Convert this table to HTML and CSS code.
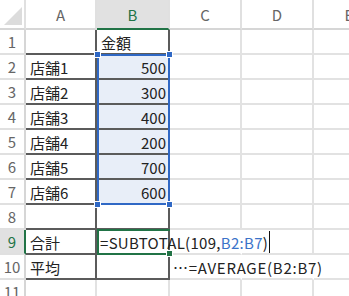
FILE: index.html
```html
<!DOCTYPE html>
<html lang="ja">
<head>
<meta charset="utf-8">
<title>Sheet1</title>
<link rel="stylesheet" href="styles.css">
</head>
<body>
<div class="workspace">
  <div class="sheet grid">
    <!-- column headers -->
    <div class="corner"><span class="tri"></span></div>
    <div class="colhdr">A</div>
    <div class="colhdr is-active">B</div>
    <div class="colhdr">C</div>
    <div class="colhdr">D</div>
    <div class="colhdr">E</div>

    <!-- row 1 -->
    <div class="rowhdr">1</div>
    <div class="cell tb"></div>
    <div class="cell tb">金額</div>
    <div class="cell"></div><div class="cell"></div><div class="cell"></div>

    <!-- rows 2-7 -->
    <div class="rowhdr">2</div>
    <div class="cell tb">店舗1</div>
    <div class="cell tb sel num">500</div>
    <div class="cell"></div><div class="cell"></div><div class="cell"></div>

    <div class="rowhdr">3</div>
    <div class="cell tb">店舗2</div>
    <div class="cell tb sel num">300</div>
    <div class="cell"></div><div class="cell"></div><div class="cell"></div>

    <div class="rowhdr">4</div>
    <div class="cell tb">店舗3</div>
    <div class="cell tb sel num">400</div>
    <div class="cell"></div><div class="cell"></div><div class="cell"></div>

    <div class="rowhdr">5</div>
    <div class="cell tb">店舗4</div>
    <div class="cell tb sel num">200</div>
    <div class="cell"></div><div class="cell"></div><div class="cell"></div>

    <div class="rowhdr">6</div>
    <div class="cell tb">店舗5</div>
    <div class="cell tb sel num">700</div>
    <div class="cell"></div><div class="cell"></div><div class="cell"></div>

    <div class="rowhdr">7</div>
    <div class="cell tb">店舗6</div>
    <div class="cell tb sel num">600</div>
    <div class="cell"></div><div class="cell"></div><div class="cell"></div>

    <!-- row 8 -->
    <div class="rowhdr">8</div>
    <div class="cell tb"></div>
    <div class="cell tb"></div>
    <div class="cell"></div><div class="cell"></div><div class="cell"></div>

    <!-- row 9: formula being edited in B9 -->
    <div class="rowhdr is-active">9</div>
    <div class="cell tb">合計</div>
    <div class="cell tb spill">=SUBTOTAL(109,<span class="ref">B2:B7</span>)<span class="caret"></span></div>
    <div class="cell no-right"></div><div class="cell"></div><div class="cell"></div>

    <!-- row 10 -->
    <div class="rowhdr">10</div>
    <div class="cell tb">平均</div>
    <div class="cell tb"></div>
    <div class="cell no-right spill note">…=AVERAGE(B2:B7)</div><div class="cell no-right"></div><div class="cell"></div>

    <!-- row 11 -->
    <div class="rowhdr">11</div>
    <div class="cell"></div><div class="cell"></div>
    <div class="cell"></div><div class="cell"></div><div class="cell"></div>
  </div>

  <!-- selection layer, same track sizes as the sheet -->
  <div class="marks grid">
    <div class="range">
      <span class="handle h-tl"></span>
      <span class="handle h-tr"></span>
      <span class="handle h-bl"></span>
      <span class="handle h-br"></span>
    </div>
    <div class="active-cell"><span class="fill"></span></div>
  </div>
</div>
</body>
</html>
```

FILE: styles.css
```css
html, body {
  margin: 0;
  padding: 0;
  background: #fff;
  overflow: hidden;
}

.workspace {
  display: grid;
  width: 386px;
}

.grid {
  grid-area: 1 / 1;
  display: grid;
  grid-template-columns: 26px 71px 73px 72px 72px 72px;
  grid-template-rows: 30px repeat(11, 25px);
}

.sheet {
  font-family: "Noto Sans CJK JP", "Noto Sans", sans-serif;
  font-size: 15px;
  color: #222;
}

.marks {
  pointer-events: none;
  z-index: 3;
}

.grid > div {
  box-sizing: border-box;
}

/* header strip */
.corner,
.colhdr,
.rowhdr {
  background: #fff;
  color: #666;
  display: flex;
  align-items: center;
  justify-content: center;
  border-right: 2px solid #e0e0e0;
  border-bottom: 2px solid #d6d6d6;
  font-size: 15px;
}

.corner {
  position: relative;
}

.tri {
  position: absolute;
  right: 2px;
  bottom: 3px;
  width: 0;
  height: 0;
  border-left: 18px solid transparent;
  border-bottom: 18px solid #dcdcdc;
}

.rowhdr {
  border-bottom-color: #e0e0e0;
  border-right-color: #d6d6d6;
}

.colhdr.is-active {
  background: #e1e1e1;
  color: #217346;
  border-bottom-color: #217346;
}

.rowhdr.is-active {
  background: #e1e1e1;
  color: #217346;
  border-right-color: #217346;
}

/* cells */
.cell {
  display: flex;
  align-items: center;
  padding: 1px 4px 0;
  white-space: nowrap;
  border-right: 2px solid #e2e2e2;
  border-bottom: 2px solid #e2e2e2;
  min-width: 0;
}

.cell.tb {
  border-right-color: #5b5b5b;
  border-bottom-color: #5b5b5b;
}

.cell.num {
  justify-content: flex-end;
  padding-right: 2px;
}

.cell.sel {
  background: #e8eef8;
}

.cell.no-right {
  border-right-color: transparent;
}

.cell.spill {
  overflow: visible;
  position: relative;
  z-index: 2;
  padding-left: 3px;
  letter-spacing: 0.3px;
}

.cell.note {
  letter-spacing: 0.75px;
}

.ref {
  color: #3b73c9;
}

.caret {
  display: inline-block;
  width: 0;
  height: 22px;
  margin-left: 1px;
  border-left: 1px solid #111;
}

/* selection outline for B2:B7 */
.range {
  grid-column: 3;
  grid-row: 3 / 9;
  position: relative;
  margin-top: -1px;
  border: 2px solid #2f68c5;
}

.handle {
  position: absolute;
  width: 5px;
  height: 5px;
  background: #2f68c5;
  border: 1px solid #fff;
}

.h-tl { left: -5px; top: -5px; }
.h-tr { right: -5px; top: -5px; }
.h-bl { left: -5px; bottom: -5px; }
.h-br { right: -5px; bottom: -5px; }

/* active cell B9 */
.active-cell {
  grid-column: 3;
  grid-row: 10;
  position: relative;
  margin-top: -1px;
  border: 2px solid #217346;
  border-right: none;
}

.fill {
  position: absolute;
  right: -3px;
  bottom: -4px;
  width: 5px;
  height: 5px;
  background: #217346;
  border: 1px solid #fff;
}
```
